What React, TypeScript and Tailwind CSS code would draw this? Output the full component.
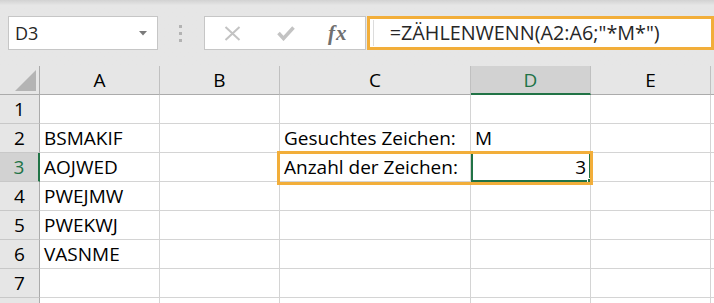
import React from "react";

const cols = ["A", "B", "C", "D", "E"];

const data: Record<number, Record<string, { v: string; right?: boolean }>> = {
  2: { A: { v: "BSMAKIF" }, C: { v: "Gesuchtes Zeichen:" }, D: { v: "M" } },
  3: { A: { v: "AOJWED" }, C: { v: "Anzahl der Zeichen:" }, D: { v: "3", right: true } },
  4: { A: { v: "PWEJMW" } },
  5: { A: { v: "PWEKWJ" } },
  6: { A: { v: "VASNME" } },
};

export default function App() {
  const rows = [1, 2, 3, 4, 5, 6, 7, 8];
  return (
    <div className="w-[714px] h-[303px] overflow-hidden bg-[#e6e6e6] font-['Open_Sans',sans-serif] text-black">
      {/* toolbar */}
      <div className="h-[66px] bg-gradient-to-b from-[#d2d2d2] via-[#e6e6e6] via-[8%] to-[#e6e6e6] pt-[16px] flex items-start">
        <div className="ml-[8px] w-[150px] h-[34px] border border-[#c6c6c6] bg-white flex items-center justify-between pl-[6px] pr-[10px]">
          <span className="text-[18px] leading-none text-[#262626]">D3</span>
          <svg width="8" height="5" viewBox="0 0 8 5">
            <path d="M0 0 L8 0 L4 4.5 Z" fill="#7a7a7a" />
          </svg>
        </div>
        <div className="w-[46px] h-[34px] flex flex-col items-center justify-center gap-[4px]">
          <div className="w-[3px] h-[3px] bg-[#b3b3b3]" />
          <div className="w-[3px] h-[3px] bg-[#b3b3b3]" />
          <div className="w-[3px] h-[3px] bg-[#b3b3b3]" />
        </div>
        <div className="w-[162px] h-[34px] border border-[#c6c6c6] bg-white flex items-center">
          <div className="w-[56px] flex justify-center">
            <svg width="17" height="15" viewBox="0 0 17 15">
              <path d="M1.5 1 L15.5 14 M15.5 1 L1.5 14" stroke="#c3c3c3" strokeWidth="2" />
            </svg>
          </div>
          <div className="w-[50px] flex justify-center">
            <svg width="18" height="15" viewBox="0 0 18 15">
              <path d="M1.5 7 L6.5 12.5 L16.5 1.5" stroke="#c3c3c3" strokeWidth="3.5" fill="none" />
            </svg>
          </div>
          <div className="w-[54px] flex justify-center">
            <span className="font-['Liberation_Serif',serif] italic font-semibold text-[21px] leading-none text-[#707070] tracking-[1px]">fx</span>
          </div>
        </div>
        <div className="ml-[1px] w-[348px] h-[34px] border-[3px] border-[#f2ae3a] bg-white flex items-center">
          <div className="ml-[3px] w-[1px] h-[26px] bg-[#dcdcdc]" />
          <span className="ml-[16px] text-[19.8px] leading-none text-[#262626] whitespace-nowrap">=ZÄHLENWENN(A2:A6;"*M*")</span>
        </div>
      </div>

      {/* grid */}
      <div className="relative">
        <div className="grid grid-cols-[40px_120px_120px_191px_120px_120px_1fr]">
          {/* header row */}
          <div className="h-[29px] border-r border-b border-[#ababab] bg-[#e6e6e6] flex items-end justify-end pr-[3px] pb-[3px]">
            <svg width="21" height="21" viewBox="0 0 21 21">
              <path d="M21 0 L21 21 L0 21 Z" fill="#b4b4b4" />
            </svg>
          </div>
          {cols.map((c) => (
            <div
              key={c}
              className={
                c === "D"
                  ? "h-[29px] border-r border-[#c0c0c0] border-b-2 border-b-[#217346] bg-[#d2d2d2] text-[#217346] text-[19px] leading-[29px] text-center"
                  : "h-[29px] border-r border-[#c0c0c0] border-b border-b-[#ababab] bg-[#e6e6e6] text-[19px] leading-[29px] text-center"
              }
            >
              {c}
            </div>
          ))}
          <div className="h-[29px] border-b border-[#ababab] bg-[#e6e6e6]" />

          {rows.map((r) => (
            <React.Fragment key={r}>
              <div
                className={
                  r === 3
                    ? "h-[29px] border-b border-[#c8c8c8] border-r-2 border-r-[#217346] bg-[#d2d2d2] text-[#217346] text-[19px] leading-[29px] text-center"
                    : "h-[29px] border-b border-[#c8c8c8] border-r border-r-[#ababab] bg-[#e6e6e6] text-[19px] leading-[29px] text-center"
                }
              >
                {r < 8 ? r : ""}
              </div>
              {cols.map((c) => {
                const cell = data[r]?.[c];
                const sel = r === 3 && c === "D";
                return (
                  <div
                    key={c}
                    className={
                      sel
                        ? "-mt-[1px] h-[30px] border-2 border-[#217346] bg-white text-[19px] leading-[27px] px-[3px] text-right relative"
                        : "h-[29px] border-r border-b border-[#d4d4d4] bg-white text-[19px] leading-[29px] px-[4px] whitespace-nowrap " +
                          (cell?.right ? "text-right" : "text-left")
                    }
                  >
                    {cell?.v}
                    {sel && (
                      <div className="absolute right-[-4px] bottom-[-4px] w-[6px] h-[6px] bg-[#217346] border border-white" />
                    )}
                  </div>
                );
              })}
              <div className="h-[29px] border-b border-[#d4d4d4] bg-white" />
            </React.Fragment>
          ))}
        </div>
        {/* annotation overlay around C3:D3 */}
        <div className="absolute left-[277px] top-[85px] w-[316px] h-[34px] border-[3px] border-[#f2ae3a] pointer-events-none" />
      </div>
    </div>
  );
}
